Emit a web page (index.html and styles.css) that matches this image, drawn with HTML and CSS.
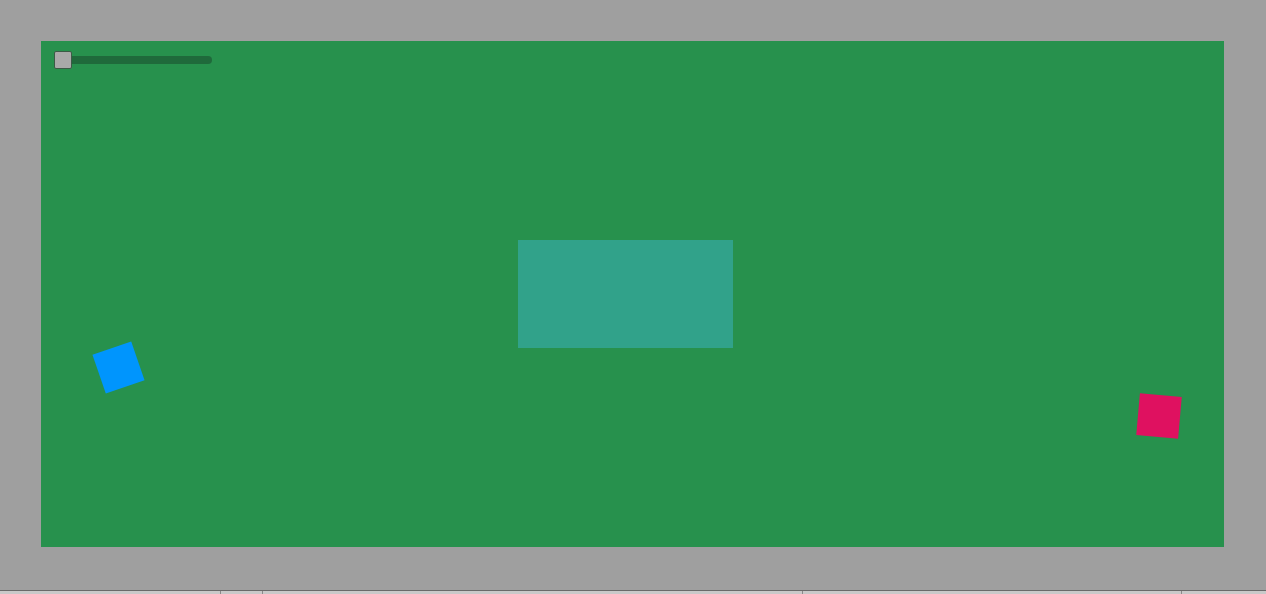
FILE: index.html
```html
<!DOCTYPE html>
<html>
<head>
<meta charset="utf-8">
<link rel="stylesheet" href="styles.css">
</head>
<body>
<div class="stage">
  <div class="canvas">
    <div class="slider"><div class="track"></div><div class="thumb"></div></div>
    <div class="shape teal"></div>
    <div class="shape blue"></div>
    <div class="shape pink"></div>
  </div>
</div>
<div class="strip">
  <div class="cell c1"></div>
  <div class="cell c2"></div>
  <div class="cell c3"></div>
  <div class="cell c4"></div>
  <div class="cell c5"></div>
</div>
</body>
</html>
```
FILE: styles.css
```css
html, body { margin: 0; padding: 0; }
body {
  width: 1266px;
  height: 594px;
  overflow: hidden;
  background: #9f9f9f;
  font-family: "Liberation Sans", Arial, sans-serif;
}
.stage {
  height: 590px;
  padding: 41px 42px 0 41px;
  box-sizing: border-box;
}
.canvas {
  position: relative;
  width: 1183px;
  height: 506px;
  background: #27914d;
}
.slider {
  position: absolute;
  left: 13px;
  top: 10px;
  width: 160px;
  height: 18px;
}
.track {
  position: absolute;
  left: 6px;
  top: 5px;
  width: 152px;
  height: 8px;
  border-radius: 4px;
  background: #1f6a3b;
}
.thumb {
  position: absolute;
  left: 0;
  top: 0;
  width: 16px;
  height: 16px;
  border: 1px solid #3c5a46;
  border-radius: 2px;
  background: #a9a9a9;
}
.shape { position: absolute; }
.teal {
  left: 477px;
  top: 199px;
  width: 215px;
  height: 108px;
  background: #31a28a;
}
.blue {
  left: 57px;
  top: 306px;
  width: 41px;
  height: 41px;
  background: #0095fd;
  transform: rotate(-19deg);
}
.pink {
  left: 1097px;
  top: 354px;
  width: 42px;
  height: 42px;
  background: #df1160;
  transform: rotate(5deg);
}
.strip {
  display: flex;
  height: 4px;
  border-top: 1px solid #6a6a6a;
  background: #c9c9c9;
  box-sizing: border-box;
}
.cell { height: 100%; border-right: 1px solid #8a8a8a; }
.c1 { width: 220px; }
.c2 { width: 41px; }
.c3 { width: 539px; }
.c4 { width: 378px; }
.c5 { flex: 1; border-right: none; }
```
